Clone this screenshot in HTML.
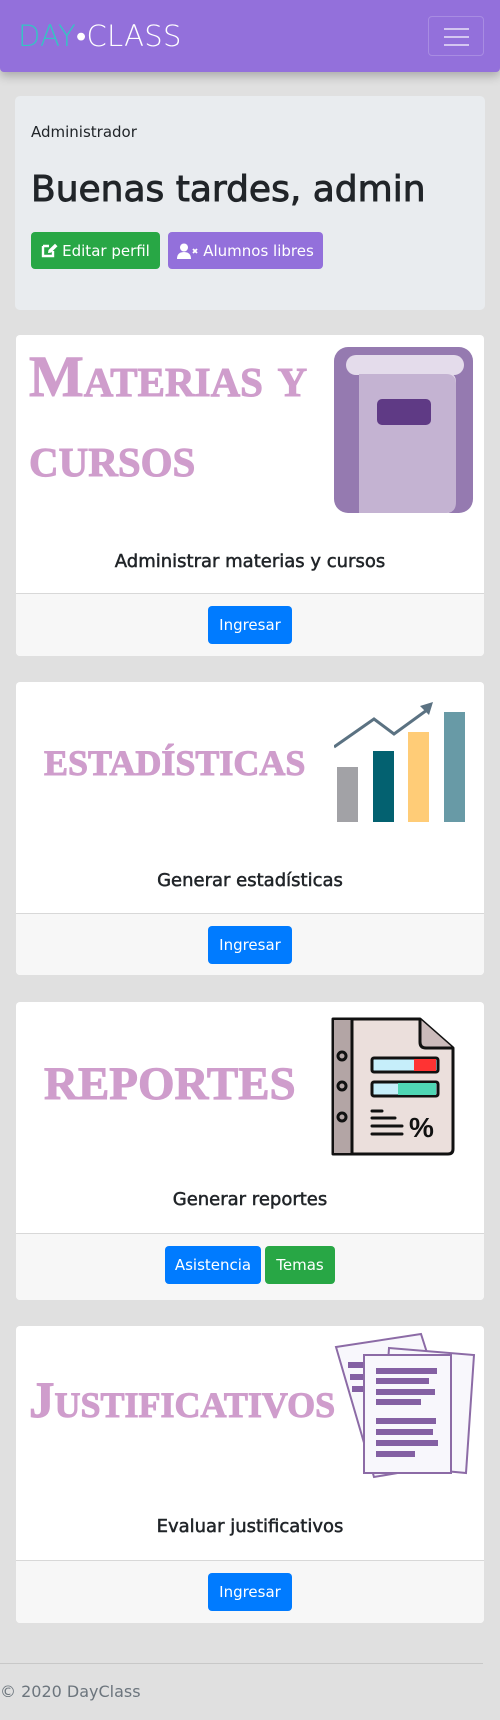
<!DOCTYPE html>
<html><head><meta charset="utf-8">
<style>
*{margin:0;padding:0;box-sizing:border-box}
body{width:500px;height:1720px;background:#e0e0e0;font-family:"Liberation Sans","DejaVu Sans",sans-serif;position:relative;overflow:hidden;color:#212529}
.nav{position:absolute;left:0;top:0;width:500px;height:72px;background:#9370db;border-radius:0 0 4px 4px;box-shadow:0 4px 10px rgba(0,0,0,.25)}
.logo{position:absolute;left:18px;top:19px;font-size:29px;letter-spacing:0.3px;font-family:"DejaVu Sans","Liberation Sans",sans-serif;font-weight:200;line-height:34px}
.logo .d{color:#35c4c4}.logo .c{color:#fff}
.tog{position:absolute;left:428px;top:16px;width:56px;height:40px;border:1px solid rgba(255,255,255,.2);border-radius:4px}
.tog i{position:absolute;left:15px;width:25px;height:2px;background:rgba(255,255,255,.6)}
.jum{position:absolute;left:15px;top:96px;width:470px;height:214px;background:#e9ecef;border-radius:5px}
.jum .r{position:absolute;left:16px;top:27px;font-size:15px;font-family:"DejaVu Sans","Liberation Sans",sans-serif}
.jum h1{position:absolute;left:16px;top:76px;font-size:36px;line-height:1;font-weight:normal;font-family:"DejaVu Sans","Liberation Sans",sans-serif;-webkit-text-stroke:0.9px #212529;white-space:nowrap}
.btn{position:absolute;color:#fff;font-size:15px;border-radius:4px;display:flex;align-items:center;justify-content:center;font-family:"DejaVu Sans","Liberation Sans",sans-serif;gap:4px}
.card{position:absolute;left:16px;width:468px;background:#fff;border-radius:4px;overflow:hidden}
.card .ft{position:absolute;left:0;bottom:0;width:100%;background:#f7f7f7;border-top:1px solid #d8d8d8}
.card .t{position:absolute;left:0;width:100%;text-align:center;font-size:18px;font-family:"DejaVu Sans","Liberation Sans",sans-serif;-webkit-text-stroke:0.5px #212529}
.big{position:absolute;font-family:"Liberation Serif",serif;font-weight:bold;color:#cf9dcc;font-variant:small-caps;white-space:nowrap;line-height:1;-webkit-text-stroke:1px #cf9dcc}
.blue{background:#007bff}.green{background:#28a745}
</style></head><body>
<div class="nav">
 <div class="logo"><span class="d">DAY</span><span class="c">•CLASS</span></div>
 <div class="tog"><i style="top:11px"></i><i style="top:19px"></i><i style="top:27px"></i></div>
</div>
<div class="jum">
 <div class="r">Administrador</div>
 <h1>Buenas tardes, admin</h1>
 <div class="btn green" style="left:16px;top:136px;width:129px;height:37px"><svg width="17" height="15" viewBox="0 0 17 15"><path d="M2 3 H8 M2 3 V13 H12 V8" fill="none" stroke="#fff" stroke-width="2.4"/><path d="M7 10 L7.5 7 L14 0.8 L16.5 3.3 L10 9.6 Z" fill="#fff"/></svg>Editar perfil</div>
 <div class="btn" style="left:153px;top:136px;width:155px;height:37px;background:#9370db"><svg width="22" height="16" viewBox="0 0 22 16"><circle cx="7" cy="4.5" r="4" fill="#fff"/><path d="M0 16 Q0 9 7 9 Q14 9 14 16 Z" fill="#fff"/><path d="M16 6 L20 10 M20 6 L16 10" stroke="#fff" stroke-width="1.8"/></svg>Alumnos libres</div>
</div>

<!-- card 1 -->
<div class="card" style="top:335px;height:321px">
 <div class="big" style="left:13px;top:13px;font-size:58px">Materias y</div>
 <div class="big" style="left:13px;top:93px;font-size:58px">cursos</div>
 <svg style="position:absolute;left:318px;top:12px" width="140" height="170" viewBox="0 0 140 170">
  <rect x="0" y="0" width="139" height="166" rx="14" fill="#957ab0"/>
  <rect x="12" y="8" width="118" height="20" rx="10" fill="#e4dceb"/>
  <path d="M25 26 H113 Q122 26 122 35 V145 L115 166 H25 Z" fill="#e4dceb"/>
  <path d="M25 27 H112 Q122 27 122 37 V155 Q122 166 112 166 H25 Z" fill="#c4b3d2"/>
  <rect x="43" y="52" width="54" height="26" rx="5" fill="#5f3a85"/>
 </svg>
 <div class="t" style="top:216px">Administrar materias y cursos</div>
 <div class="ft" style="height:63px"><div class="btn blue" style="left:192px;top:12px;width:84px;height:38px">Ingresar</div></div>
</div>

<!-- card 2 -->
<div class="card" style="top:682px;height:293px">
 <div class="big" style="left:28px;top:51px;font-size:52px">estadísticas</div>
 <svg style="position:absolute;left:318px;top:20px" width="150" height="125" viewBox="0 0 150 125">
  <rect x="3" y="65" width="21" height="55" fill="#a2a2a6"/>
  <rect x="39" y="49" width="21" height="71" fill="#036170"/>
  <rect x="74" y="30" width="21" height="90" fill="#ffcc77"/>
  <rect x="110" y="10" width="21" height="110" fill="#689aa6"/>
  <polyline points="0,45 40,17 60,32 93,8" fill="none" stroke="#5b7282" stroke-width="3"/>
  <polygon points="99,0 86,4 95,13" fill="#5b7282"/>
 </svg>
 <div class="t" style="top:188px">Generar estadísticas</div>
 <div class="ft" style="height:62px"><div class="btn blue" style="left:192px;top:12px;width:84px;height:38px">Ingresar</div></div>
</div>

<!-- card 3 -->
<div class="card" style="top:1002px;height:298px">
 <div class="big" style="left:28px;top:42px;font-size:67px">reportes</div>
 <svg style="position:absolute;left:314px;top:14px" width="130" height="142" viewBox="0 0 130 142">
  <path d="M3 3 H90 L123 32 V133 Q123 138 118 138 H3 Z" fill="#ebdfdc" stroke="#111" stroke-width="3" stroke-linejoin="round"/>
  <rect x="4" y="4" width="17" height="133" fill="#b3a5a5"/>
  <line x1="22" y1="3" x2="22" y2="138" stroke="#111" stroke-width="3"/>
  <path d="M90 3 V26 Q90 32 96 32 H123" fill="#cbbbbb" stroke="#111" stroke-width="3"/>
  <circle cx="12" cy="40" r="4" fill="none" stroke="#111" stroke-width="3"/>
  <circle cx="12" cy="70" r="4" fill="none" stroke="#111" stroke-width="3"/>
  <circle cx="12" cy="101" r="4" fill="none" stroke="#111" stroke-width="3"/>
  <rect x="42" y="42" width="66" height="14" rx="2" fill="#c6eefa" stroke="#111" stroke-width="3"/>
  <rect x="84" y="43" width="22" height="12" fill="#f33"/>
  <rect x="42" y="66" width="66" height="14" rx="2" fill="#c6eefa" stroke="#111" stroke-width="3"/>
  <rect x="68" y="67" width="38" height="12" fill="#4fd6b4"/>
  <g stroke="#111" stroke-width="3" stroke-linecap="round"><line x1="42" y1="95" x2="52" y2="95"/><line x1="42" y1="102" x2="65" y2="102"/><line x1="42" y1="110" x2="72" y2="110"/><line x1="42" y1="118" x2="72" y2="118"/></g>
  <text x="79" y="121" font-family="Liberation Sans" font-weight="bold" font-size="28" fill="#111">%</text>
 </svg>
 <div class="t" style="top:187px">Generar reportes</div>
 <div class="ft" style="height:67px">
  <div class="btn blue" style="left:149px;top:12px;width:96px;height:38px">Asistencia</div>
  <div class="btn green" style="left:249px;top:12px;width:70px;height:38px">Temas</div>
 </div>
</div>

<!-- card 4 -->
<div class="card" style="top:1326px;height:297px">
 <div class="big" style="left:13px;top:50px;font-size:51px">Justificativos</div>
 <svg style="position:absolute;left:318px;top:6px" width="150" height="150" viewBox="0 0 150 150">
  <polygon points="2,15 87,2 128,130 40,145" fill="#f8f7fc" stroke="#8c6ba6" stroke-width="2"/>
  <polygon points="55,16 140,23 132,141 47,133" fill="#f8f7fc" stroke="#8c6ba6" stroke-width="2"/>
  <g fill="#8460a3"><rect x="14" y="30" width="20" height="6"/><rect x="16" y="42" width="20" height="6"/><rect x="18" y="54" width="20" height="6"/></g>
  <rect x="30" y="23" width="87" height="118" fill="#f8f7fc" stroke="#8c6ba6" stroke-width="2"/>
  <g fill="#8460a3"><rect x="42" y="36" width="61" height="6"/><rect x="42" y="46" width="53" height="6"/><rect x="42" y="57" width="59" height="6"/><rect x="42" y="67" width="45" height="6"/><rect x="42" y="86" width="60" height="6"/><rect x="42" y="97" width="57" height="6"/><rect x="42" y="108" width="62" height="6"/><rect x="42" y="119" width="39" height="6"/></g>
 </svg>
 <div class="t" style="top:190px">Evaluar justificativos</div>
 <div class="ft" style="height:63px"><div class="btn blue" style="left:192px;top:12px;width:84px;height:38px">Ingresar</div></div>
</div>

<div style="position:absolute;left:0;top:1663px;width:483px;height:1px;background:#c8c8c8"></div>
<div style="position:absolute;left:0;top:1682px;font-size:16px;color:#6c757d;font-family:'DejaVu Sans','Liberation Sans',sans-serif">© 2020 DayClass</div>
</body></html>
